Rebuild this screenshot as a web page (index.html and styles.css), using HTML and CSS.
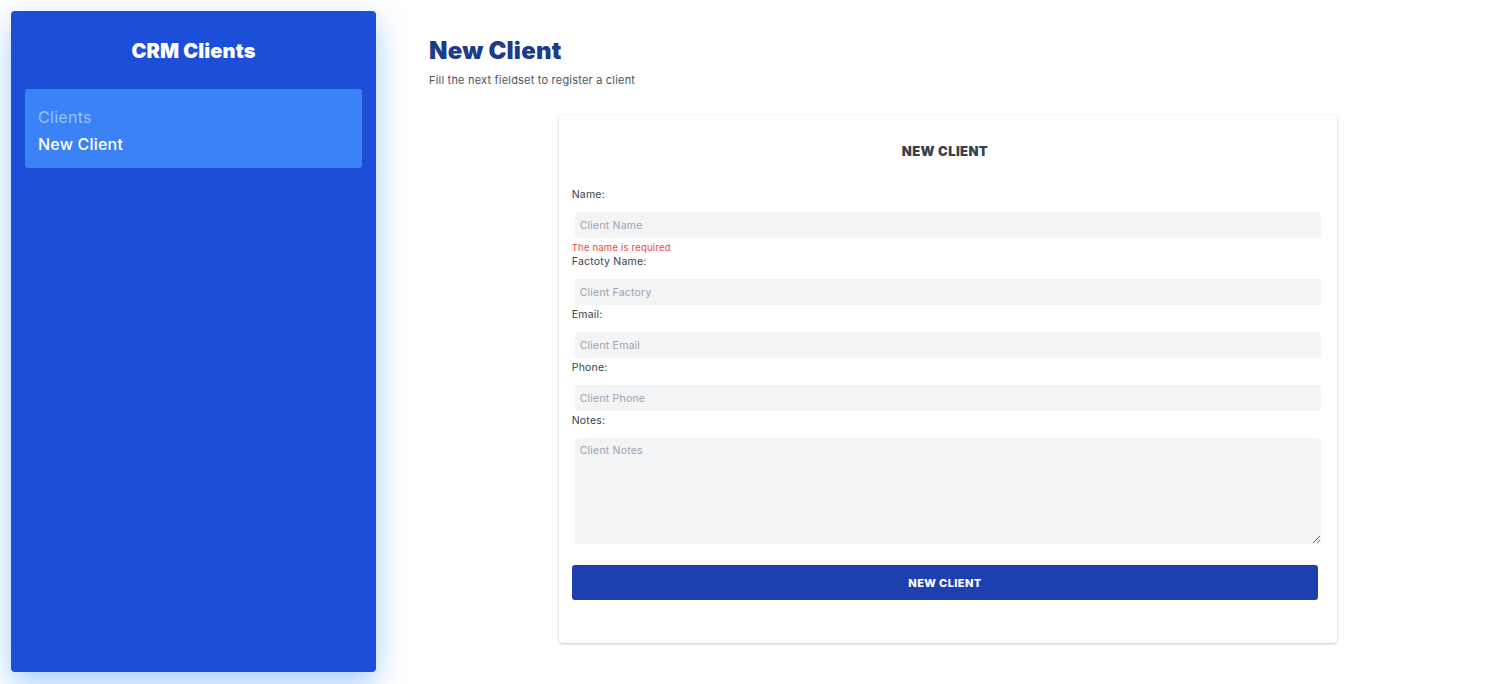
FILE: index.html
```html
<!DOCTYPE html>
<html lang="en">
<head>
<meta charset="utf-8">
<title>CRM Clients</title>
<link rel="stylesheet" href="styles.css">
</head>
<body>
<div class="layout">
  <aside class="sidebar">
    <h2 class="brand">CRM Clients</h2>
    <nav class="menu">
      <a class="menu-link muted" href="#">Clients</a>
      <a class="menu-link active" href="#">New Client</a>
    </nav>
  </aside>
  <main class="main">
    <h1 class="page-title">New Client</h1>
    <p class="page-sub">Fill the next fieldset to register a client</p>
    <form class="card">
      <h3 class="card-title">NEW CLIENT</h3>
      <div class="field">
        <label class="label">Name:</label>
        <input class="input" type="text" placeholder="Client Name">
        <div class="error">The name is required</div>
      </div>
      <div class="field">
        <label class="label">Factoty Name:</label>
        <input class="input" type="text" placeholder="Client Factory">
      </div>
      <div class="field">
        <label class="label">Email:</label>
        <input class="input" type="text" placeholder="Client Email">
      </div>
      <div class="field">
        <label class="label">Phone:</label>
        <input class="input" type="text" placeholder="Client Phone">
      </div>
      <div class="field">
        <label class="label">Notes:</label>
        <textarea class="input textarea" placeholder="Client Notes"></textarea>
      </div>
      <button class="btn" type="button">NEW CLIENT</button>
    </form>
  </main>
</div>
</body>
</html>
```

FILE: styles.css
```css
* { box-sizing: border-box; }
html, body { margin: 0; padding: 0; background: #ffffff; }
body { font-family: "Inter", "Open Sans", sans-serif; color: #374151; }

.layout { display: flex; min-height: 100vh; }

.sidebar {
  width: 365px;
  flex: 0 0 365px;
  margin: 11px 0 12px 11px;
  background: #1d4ed8;
  border-radius: 4px;
  box-shadow: 0 12px 30px rgba(96, 165, 250, 0.55);
  padding: 28px 14px;
}
.brand {
  margin: 0;
  text-align: center;
  color: #ffffff;
  font-size: 20px;
  line-height: 24px;
  font-weight: 900;
  letter-spacing: 0.1px;
}
.menu {
  margin-top: 26px;
  background: #3b82f6;
  border-radius: 3px;
  padding: 18px 13px 14px;
  display: flex;
  flex-direction: column;
  gap: 7px;
}
.menu-link {
  display: block;
  font-size: 16px;
  line-height: 20px;
  text-decoration: none;
  letter-spacing: 0.3px;
}
.menu-link.muted { color: #93c5fd; font-weight: 400; }
.menu-link.active { color: #ffffff; font-weight: 500; letter-spacing: 0.2px; }

.main {
  flex: 1;
  padding: 35px 37px 30px 53px;
}
.page-title {
  margin: 0;
  font-size: 24px;
  line-height: 32px;
  font-weight: 900;
  color: #1e3a8a;
  letter-spacing: 0.2px;
}
.page-sub {
  margin: 5px 0 0;
  font-size: 11px;
  line-height: 16px;
  color: #4b5563;
  letter-spacing: 0.2px;
}

.card {
  width: 75%;
  margin: 27px auto 0;
  background: #ffffff;
  border-radius: 4px;
  box-shadow: 0 1px 3px rgba(0, 0, 0, 0.18), 0 1px 2px rgba(0, 0, 0, 0.06);
  padding: 26px 19px 43px 13px;
}
.card-title {
  margin: 0 0 26px;
  text-align: center;
  font-size: 13px;
  line-height: 20px;
  font-weight: 900;
  color: #374151;
  letter-spacing: 0.4px;
}
.field { display: flex; flex-direction: column; }
.label {
  font-size: 10.5px;
  line-height: 16px;
  color: #374151;
  margin-bottom: 9px;
  letter-spacing: 0.2px;
}
.input {
  display: block;
  margin: 0 -3px 2px 3px;
  height: 26px;
  border: none;
  outline: none;
  background: #f3f4f6;
  border-radius: 4px;
  padding: 0 5px;
  font-family: inherit;
  font-size: 10.5px;
  letter-spacing: 0.2px;
  color: #374151;
}
.input::placeholder { color: #9ca3af; }
.textarea {
  height: 106px;
  padding-top: 6px;
  resize: vertical;
}
.error {
  font-size: 9.5px;
  line-height: 13px;
  margin-top: 1px;
  color: #ef4444;
  letter-spacing: 0.2px;
}
.btn {
  display: block;
  width: 100%;
  margin-top: 19px;
  height: 35px;
  border: none;
  border-radius: 3px;
  background: #1e40af;
  color: #ffffff;
  font-family: inherit;
  font-size: 11px;
  font-weight: 800;
  letter-spacing: 0.4px;
  cursor: pointer;
}
```
